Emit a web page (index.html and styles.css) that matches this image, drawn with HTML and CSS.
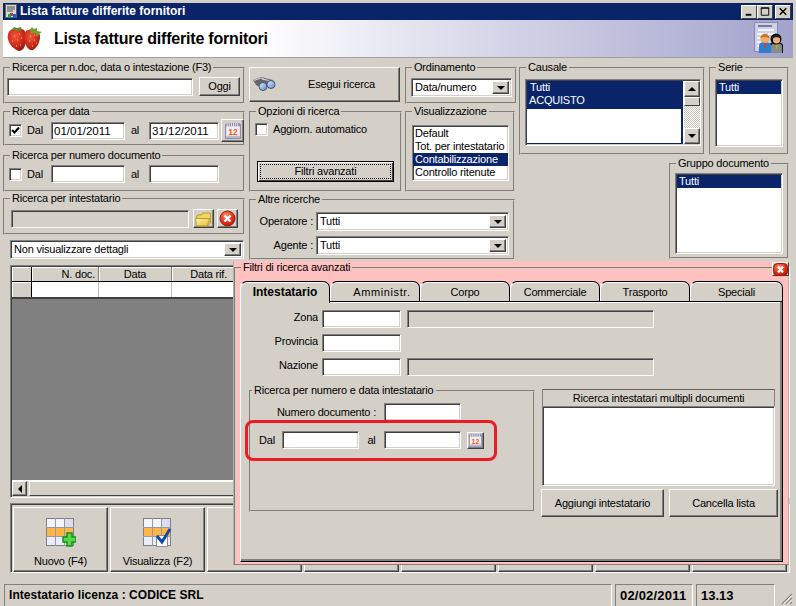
FILE: index.html
```html
<!DOCTYPE html>
<html lang="it">
<head>
<meta charset="utf-8">
<title>Lista fatture differite fornitori</title>
<link rel="stylesheet" href="styles.css">
</head>
<body>
<svg class="defs" width="0" height="0" aria-hidden="true">
  <defs>
    <radialGradient id="berry" cx="40%" cy="35%" r="70%"><stop offset="0" stop-color="#f0583c"/><stop offset=".6" stop-color="#cf2a1c"/><stop offset="1" stop-color="#8f1a12"/></radialGradient>
    <radialGradient id="redball" cx="40%" cy="30%" r="75%"><stop offset="0" stop-color="#ff8a60"/><stop offset=".6" stop-color="#e8301c"/><stop offset="1" stop-color="#b01808"/></radialGradient>
    <linearGradient id="lens" x1="0" y1="0" x2="1" y2="1"><stop offset="0" stop-color="#dcecff"/><stop offset="1" stop-color="#4f8fd8"/></linearGradient>
    <linearGradient id="folder" x1="0" y1="0" x2="1" y2="1"><stop offset="0" stop-color="#fff6b8"/><stop offset="1" stop-color="#e6b92c"/></linearGradient>
    <symbol id="cal" viewBox="0 0 17 17">
      <rect x="1.5" y="2.5" width="14" height="13" fill="#eeeefa" stroke="#8888a8"/>
      <rect x="2" y="1" width="13" height="3" fill="#8c8cac"/>
      <path d="M3 1v3M5 1v3M7 1v3M9 1v3M11 1v3M13 1v3" stroke="#fff" stroke-width=".7"/>
      <rect x="2" y="13" width="13" height="2" fill="#b8b8d8"/>
      <text x="8.500" y="12" text-anchor="middle" class="cal-num">12</text>
    </symbol>
    <symbol id="tbl" viewBox="0 0 28 28">
      <rect x="0.5" y="0.5" width="27" height="27" fill="#fff" stroke="#808080"/>
      <rect x="1" y="1" width="26" height="8" fill="#f4f4ff"/>
      <rect x="19" y="1" width="8" height="8" fill="#dcdcf4"/>
      <rect x="1" y="10" width="26" height="8" fill="#ffb648"/>
      <rect x="1" y="19" width="26" height="8" fill="#ececff"/>
      <path d="M9.500 0v28M18.500 0v28M0 9.500h28M0 18.500h28" stroke="#9a9a9a"/>
    </symbol>
  </defs>
</svg>

<div class="app">
  <div class="titlebar">
    <svg class="title-icon" width="14" height="15" viewBox="0 0 14 15">
      <rect x=".5" y=".5" width="11" height="13" fill="#d8d8d8" stroke="#606060"/>
      <path d="M2 3h8M2 5h8M2 7h6" stroke="#505050"/>
      <rect x="5" y="9" width="3" height="3" fill="#e03020"/><rect x="8" y="10" width="3" height="4" fill="#2060d0"/><rect x="3" y="10" width="3" height="4" fill="#20a040"/>
    </svg>
    <span class="title-text">Lista fatture differite fornitori</span>
    <span class="wbtns">
      <span class="wbtn"><svg width="15" height="13" viewBox="0 0 15 13"><rect x="4" y="9" width="6" height="2"/></svg></span>
      <span class="wbtn"><svg width="15" height="13" viewBox="0 0 15 13"><path d="M3.500 2.500h8v8h-8z M3 3h9" fill="none" stroke="#000"/></svg></span>
      <span class="wbtn wbtn-close"><svg width="15" height="13" viewBox="0 0 15 13"><path d="M4 3l7 7M11 3l-7 7" stroke="#000" stroke-width="1.500"/></svg></span>
    </span>
  </div>

  <header class="banner">
    <svg class="berries" width="38" height="26" viewBox="0 0 38 26">
      <path d="M18 4c-3-2-7-2-11-1-4 1-6 5-5 10 1 6 7 11 11 12 4 0 6-4 7-9 1-5 0-10-2-12z" fill="url(#berry)"/>
      <path d="M31 5c-3-2-8-2-11 0-2 3-2 9 0 14 1 3 4 6 7 5 4-2 7-8 7-13 0-3-1-5-3-6z" fill="url(#berry)"/>
      <path d="M5 4l3-3 3 1 4-1 1 3-5 1-3-1z" fill="#6d8a2a"/>
      <path d="M24 4l2-3 2 2 3-1 0 3 5 1-3 2-2 3-2-4-4 1z" fill="#7d9a30"/>
      <path d="M8 10h1M13 8h1M6 15h1M11 14h1M15 12h1M10 20h1M14 19h1M24 10h1M28 9h1M23 15h1M28 14h1M26 20h1M30 17h1" stroke="#f8c060"/>
    </svg>
    <h1 class="banner-title">Lista fatture differite fornitori</h1>
    <svg class="people" width="30" height="33" viewBox="0 0 30 33">
      <rect x=".5" y=".5" width="23" height="29" fill="#cfcfe8" stroke="#8a8ab4"/>
      <path d="M4 4h14" stroke="#7878a0" stroke-width="2"/><path d="M4 8h16M14 12h7M3 12h7M3 16h5M3 20h4M3 24h3" stroke="#fff" stroke-width="1.500"/>
      <path d="M15 31v-7c0-3 3-4 7-4s7 1 7 4v7z" fill="#000"/>
      <path d="M17 31v-7c0-2 2-3 5-3s6 1 6 3v7z" fill="#8a8a8a"/>
      <path d="M21 21h3l-1 7z" fill="#c8b020"/>
      <circle cx="22" cy="17" r="5.500" fill="#000"/><circle cx="22.500" cy="18" r="3.600" fill="#e8b080"/><path d="M18 16c1-4 8-4 9 0-3-1-6-1-9 0z" fill="#222"/>
      <path d="M5 31v-7c0-3 3-4 6-4s6 1 6 4v7z" fill="#2f7fcf"/>
      <path d="M9.500 21h3l-1.500 6z" fill="#e04020"/>
      <circle cx="11" cy="16.500" r="4.500" fill="#f0b070"/><path d="M6.500 16.500c0-6 9-6 9 0-3-2-6-2-9 0z" fill="#c87818"/>
    </svg>
  </header>

  <div class="top">
    <div class="col-a">
      <fieldset class="group g-search">
        <legend>Ricerca per n.doc, data o intestazione (F3)</legend>
        <div class="row b-search">
          <input class="field w186" type="text" aria-label="Ricerca">
          <button class="btn btn-oggi">Oggi</button>
        </div>
      </fieldset>
      <fieldset class="group g-date">
        <legend>Ricerca per data</legend>
        <div class="row b-date">
          <span class="check"><svg width="9" height="9" viewBox="0 0 9 9"><path d="M1 4l2.500 2.500L8 1.500" fill="none" stroke="#000" stroke-width="2"/></svg></span>
          <span class="lbl w24">Dal</span>
          <input class="field w74" type="text" value="01/01/2011" aria-label="Dal">
          <span class="lbl w24 lbl-to">al</span>
          <input class="field w70" type="text" value="31/12/2011" aria-label="Al">
          <button class="btn btn-cal" aria-label="Calendario"><svg width="18" height="18"><use href="#cal"/></svg></button>
        </div>
      </fieldset>
      <fieldset class="group g-num">
        <legend>Ricerca per numero documento</legend>
        <div class="row b-num">
          <span class="check"></span>
          <span class="lbl w24">Dal</span>
          <input class="field w74" type="text" aria-label="Dal">
          <span class="lbl w24 lbl-to">al</span>
          <input class="field w70" type="text" aria-label="Al">
        </div>
      </fieldset>
      <fieldset class="group g-holder">
        <legend>Ricerca per intestatario</legend>
        <div class="row b-holder">
          <input class="field field-off w178" type="text" disabled aria-label="Intestatario">
          <button class="btn btn-ico" aria-label="Apri"><svg width="17" height="16" viewBox="0 0 17 16"><path d="M1.500 6l1-2h4l1-2h8v10l-3 3h-10z" fill="#f2d860" stroke="#b89a28"/><path d="M.5 7.500h11l3 0-2 7.500h-11z" fill="url(#folder)" stroke="#b89a28"/></svg></button>
          <button class="btn btn-ico" aria-label="Cancella"><svg width="17" height="17" viewBox="0 0 17 17"><circle cx="8.500" cy="8.500" r="7.500" fill="url(#redball)" stroke="#a01808"/><path d="M5.500 5.500l6 6M11.500 5.500l-6 6" stroke="#fff" stroke-width="2.400"/></svg></button>
        </div>
      </fieldset>
      <div class="combo combo-detail"><span class="combo-text">Non visualizzare dettagli</span><span class="combo-btn"><i class="arrow-d"></i></span></div>
    </div>

    <div class="col-b">
      <div class="row-top">
        <div class="col-b1">
          <button class="btn btn-run">
            <svg class="bino" width="23" height="15" viewBox="0 0 23 15">
              <path d="M0 3l8-3 12 3 1 4-11 5-7-4z" fill="#66666e"/><path d="M1 3.500l7-2.500 5 2M9 2l7 1.500" stroke="#d8d8d8" fill="none"/>
              <circle cx="10" cy="9.500" r="4" fill="url(#lens)" stroke="#505060"/><circle cx="18" cy="7.500" r="4" fill="url(#lens)" stroke="#505060"/>
            </svg>
            <span class="run-label">Esegui ricerca</span>
          </button>
          <fieldset class="group g-opt">
            <legend>Opzioni di ricerca</legend>
            <div class="b-opt">
              <div class="row"><span class="check"></span><span class="lbl">Aggiorn. automatico</span></div>
              <button class="btn-default"><span>Filtri avanzati</span></button>
            </div>
          </fieldset>
        </div>
        <div class="col-b2">
          <fieldset class="group g-order">
            <legend>Ordinamento</legend>
            <div class="b-order"><div class="combo combo-order"><span class="combo-text">Data/numero</span><span class="combo-btn"><i class="arrow-d"></i></span></div></div>
          </fieldset>
          <fieldset class="group g-view">
            <legend>Visualizzazione</legend>
            <div class="b-view">
              <ul class="list list-view">
                <li>Default</li>
                <li>Tot. per intestatario</li>
                <li class="sel">Contabilizzazione</li>
                <li>Controllo ritenute</li>
              </ul>
            </div>
          </fieldset>
        </div>
      </div>
      <fieldset class="group g-other">
        <legend>Altre ricerche</legend>
        <div class="b-other">
          <div class="row"><span class="lbl lbl-other">Operatore :</span><div class="combo combo-other"><span class="combo-text">Tutti</span><span class="combo-btn"><i class="arrow-d"></i></span></div></div>
          <div class="row"><span class="lbl lbl-other">Agente :</span><div class="combo combo-other"><span class="combo-text">Tutti</span><span class="combo-btn"><i class="arrow-d"></i></span></div></div>
        </div>
      </fieldset>
    </div>

    <div class="col-c">
      <div class="row-top gap4">
        <fieldset class="group g-cause">
          <legend>Causale</legend>
          <div class="b-list">
            <div class="list list-cause">
              <ul class="cause-items"><li class="sel indent">Tutti</li><li class="sel tall">ACQUISTO</li></ul>
              <div class="vscroll">
                <span class="sb-btn"><i class="arrow-u"></i></span>
                <span class="sb-thumb"></span>
                <span class="sb-track"></span>
                <span class="sb-btn"><i class="arrow-d"></i></span>
              </div>
            </div>
          </div>
        </fieldset>
        <fieldset class="group g-serie">
          <legend>Serie</legend>
          <div class="b-list"><ul class="list list-serie"><li class="sel">Tutti</li></ul></div>
        </fieldset>
      </div>
      <fieldset class="group g-doc">
        <legend>Gruppo documento</legend>
        <div class="b-doc"><ul class="list list-doc"><li class="sel">Tutti</li></ul></div>
      </fieldset>
    </div>
  </div>

  <div class="table">
    <div class="thead">
      <span class="th"></span><span class="th right">N. doc.</span><span class="th center">Data</span><span class="th rif">Data rif.</span><span class="th"></span>
    </div>
    <div class="trow"><span class="th"></span><span class="td"></span><span class="td"></span><span class="td"></span><span class="td"></span></div>
    <div class="tbody"></div>
    <div class="hscroll"><span class="sb-btn"><i class="arrow-l"></i></span><span class="hthumb"></span></div>
  </div>

  <div class="toolbar">
    <button class="tool"><svg class="tool-ico" width="30" height="30" viewBox="0 0 30 30"><use href="#tbl" width="28" height="28"/><path d="M21 15h5v4h4v5h-4v4h-5v-4h-4v-5h4z" fill="#58d848" stroke="#189018" stroke-width="1.500"/></svg><span>Nuovo (F4)</span></button>
    <button class="tool"><svg class="tool-ico" width="30" height="30" viewBox="0 0 30 30"><use href="#tbl" width="28" height="28"/><rect x="13.500" y="17.500" width="11" height="11" fill="#fff" stroke="#909090"/><path d="M14 18l5 6 8-13" fill="none" stroke="#1048b0" stroke-width="3"/></svg><span>Visualizza (F2)</span></button>
    <button class="tool" aria-label="Azione"></button>
    <button class="tool" aria-label="Azione"></button>
    <button class="tool" aria-label="Azione"></button>
    <button class="tool" aria-label="Azione"></button>
    <button class="tool" aria-label="Azione"></button>
    <button class="tool" aria-label="Azione"></button>
  </div>

  <footer class="status">
    <span class="panel p-main">Intestatario licenza : CODICE SRL</span>
    <span class="panel p-date">02/02/2011</span>
    <span class="panel p-time">13.13</span>
    <svg class="grip" width="12" height="12" viewBox="0 0 12 12"><path d="M11 1L1 11M11 5L5 11M11 9L9 11" stroke="#808080" stroke-width="1.200"/><path d="M11 2.500L2.500 11M11 6.500L6.500 11" stroke="#fff"/></svg>
  </footer>

  <section class="dialog">
    <button class="dlg-close" aria-label="Chiudi"><svg width="15" height="13" viewBox="0 0 15 13"><rect x=".5" y=".5" width="14" height="12" rx="4" fill="url(#redball)" stroke="#a01808"/><path d="M5 3.500l5 6M10 3.500l-5 6" stroke="#fff" stroke-width="2.200"/></svg></button>
    <fieldset class="group g-dialog">
      <legend>Filtri di ricerca avanzati</legend>
      <div class="tabs">
        <span class="tab active">Intestatario</span>
        <span class="tab tab-adm">Amministr.</span>
        <span class="tab">Corpo</span>
        <span class="tab">Commerciale</span>
        <span class="tab">Trasporto</span>
        <span class="tab tab-last">Speciali</span>
      </div>
      <div class="tab-panel">
        <div class="form-rows">
          <div class="row"><span class="lbl lbl-form">Zona</span><input class="field w79" type="text" aria-label="Zona"><input class="field field-off w247" type="text" disabled aria-label="Zona descrizione"></div>
          <div class="row"><span class="lbl lbl-form">Provincia</span><input class="field w79" type="text" aria-label="Provincia"></div>
          <div class="row"><span class="lbl lbl-form">Nazione</span><input class="field w79" type="text" aria-label="Nazione"><input class="field field-off w247" type="text" disabled aria-label="Nazione descrizione"></div>
        </div>
        <div class="lower">
          <fieldset class="group g-holdernum">
            <legend>Ricerca per numero e data intestatario</legend>
            <div class="b-holdernum">
              <div class="row"><span class="lbl lbl-numdoc">Numero documento :</span><input class="field w77" type="text" aria-label="Numero documento"></div>
              <div class="row range">
                <span class="lbl lbl-dal">Dal</span>
                <input class="field w77" type="text" aria-label="Dal">
                <span class="lbl lbl-al">al</span>
                <input class="field w77" type="text" aria-label="Al">
                <button class="btn btn-cal-s" aria-label="Calendario"><svg width="15" height="15"><use href="#cal"/></svg></button>
              </div>
            </div>
          </fieldset>
          <div class="multi">
            <div class="multi-head">Ricerca intestatari multipli documenti</div>
            <div class="list multi-list"></div>
            <div class="row multi-actions">
              <button class="btn btn-add">Aggiungi intestatario</button>
              <button class="btn btn-clear">Cancella lista</button>
            </div>
          </div>
        </div>
      </div>
    </fieldset>
    <div class="highlight"></div>
  </section>
</div>
</body>
</html>
```

FILE: styles.css
```css
* { box-sizing: border-box; }
html, body { margin: 0; padding: 0; }
body { background: #d4d0c8; font: 11px/13px "Liberation Sans", Arial, sans-serif; letter-spacing: -.2px; color: #000; overflow: hidden; }
.defs { position: absolute; }
.cal-num { font: bold 8px "Liberation Sans", Arial, sans-serif; fill: #ff5a00; letter-spacing: 0; }
ul { list-style: none; margin: 0; padding: 0; }

.app { position: relative; width: 796px; height: 606px; padding-top: 3px; overflow: hidden; display: flex; flex-direction: column; background: #d4d0c8; }

/* title */
.titlebar { height: 17px; margin: 0 3px; flex: none; background: #0a246a; display: flex; align-items: center; color: #fff; }
.title-icon { margin-left: 2px; flex: none; }
.title-text { margin-left: 1px; font-weight: bold; font-size: 12px; letter-spacing: 0; }
.wbtns { margin-left: auto; margin-right: 2px; display: flex; }
.wbtn { width: 16px; height: 14px; background: #d4d0c8; display: flex; align-items: center; justify-content: center; border: 1px solid; border-color: #fff #404040 #404040 #fff; }
.wbtn-close { margin-left: 2px; }

.banner { height: 38px; flex: none; margin: 0 3px; display: flex; align-items: center; border-bottom: 1px solid #a0a0a0; background: linear-gradient(90deg, #fff 32%, #a2a2cc 100%); }
.berries { margin-left: 3px; flex: none; }
.banner-title { margin: 0 0 0 10px; font-size: 16px; line-height: 20px; font-weight: bold; letter-spacing: -.2px; }
.people { margin-left: auto; margin-right: 9px; flex: none; }

/* group box */
.group { margin: 0; padding: 0; min-width: 0; border: 2px groove #d4d0c8; display: block; flex: none; }
.group legend { margin-left: 5px; padding: 0 2px; line-height: 13px; height: 13px; white-space: nowrap; }

.row { display: flex; align-items: center; }
.lbl { flex: none; white-space: nowrap; }
.center { text-align: center; }
.right { text-align: right; }
.lbl-to { text-align: center; padding-right: 4px; }

/* widgets */
.field { display: block; flex: none; height: 18px; margin: 0; padding: 0 2px; font: 11.5px "Liberation Sans", Arial, sans-serif; letter-spacing: 0; color: #000; background: #fff; border: 1px solid; border-color: #808080 #fff #fff #808080; box-shadow: inset 1px 1px 0 #404040, inset -1px -1px 0 #d4d0c8; border-radius: 0; outline: 0; }
.field-off { background: #d4d0c8; }
.w186 { width: 186px; } .w74 { width: 74px; } .w70 { width: 70px; } .w178 { width: 178px; }
.w79 { width: 79px; } .w247 { width: 247px; margin-left: 6px; } .w77 { width: 77px; }
.w24 { width: 24px; }

.btn { display: flex; align-items: center; justify-content: center; flex: none; padding: 0; margin: 0; font: inherit; letter-spacing: inherit; color: #000; background: #d4d0c8; border: 1px solid; border-color: #fff #404040 #404040 #fff; box-shadow: inset -1px -1px 0 #808080; border-radius: 0; }
.check { width: 13px; height: 13px; flex: none; display: flex; align-items: center; justify-content: center; background: #fff; border: 1px solid; border-color: #808080 #fff #fff #808080; box-shadow: inset 1px 1px 0 #404040, inset -1px -1px 0 #d4d0c8; }

.combo { display: flex; align-items: center; background: #fff; border: 1px solid; border-color: #808080 #fff #fff #808080; box-shadow: inset 1px 1px 0 #404040, inset -1px -1px 0 #d4d0c8; padding: 2px; flex: none; }
.combo-text { flex: 1; padding-left: 1px; white-space: nowrap; }
.combo-btn { width: 17px; height: 100%; flex: none; display: flex; align-items: center; justify-content: center; background: #d4d0c8; border: 1px solid; border-color: #fff #404040 #404040 #fff; box-shadow: inset -1px -1px 0 #808080; }
.arrow-d { width: 0; height: 0; border: 4px solid transparent; border-top-color: #000; border-bottom-width: 0; }
.arrow-u { width: 0; height: 0; border: 4px solid transparent; border-bottom-color: #000; border-top-width: 0; }
.arrow-l { width: 0; height: 0; border: 4px solid transparent; border-right-color: #000; border-left-width: 0; }

.list { background: #fff; border: 1px solid; border-color: #808080 #fff #fff #808080; box-shadow: inset 1px 1px 0 #404040, inset -1px -1px 0 #d4d0c8; padding: 1px; flex: none; overflow: hidden; }
.list li { height: 13px; line-height: 13px; padding-left: 2px; white-space: nowrap; }
.list li.sel { background: #0a246a; color: #fff; }

/* top */
.top { display: flex; padding: 3px 0 0 3px; flex: none; }
.col-a { width: 242px; flex: none; }
.col-b { width: 268px; margin-left: 4px; flex: none; }
.col-c { width: 270px; margin-left: 2px; flex: none; display: flex; flex-direction: column; }
.row-top { display: flex; }
.gap4 { gap: 4px; }

.g-search { width: 242px; height: 43px; }
.b-search { padding: 3px 0 0 2px; gap: 6px; }
.btn-oggi { width: 41px; height: 19px; }
.g-date { width: 242px; height: 41px; margin-top: 1px; }
.b-date { padding: 1px 0 0 4px; }
.b-date .check, .b-num .check { margin-right: 5px; }
.btn-cal { width: 23px; height: 23px; margin-left: 2px; }
.g-num { width: 242px; height: 43px; margin-top: 3px; }
.b-num { padding: 3px 0 0 4px; }
.g-holder { width: 242px; height: 43px; }
.b-holder { padding: 4px 0 0 6px; }
.btn-ico { width: 21px; height: 19px; margin-left: 3px; }
.b-holder .btn-ico:first-of-type { margin-left: 4px; }
.combo-detail { width: 234px; height: 19px; margin: 5px 0 0 7px; }

.col-b1 { width: 153px; margin-right: 3px; flex: none; }
.col-b2 { width: 112px; flex: none; }
.btn-run { width: 151px; height: 35px; margin-top: 6px; justify-content: flex-start; padding-left: 3px; }
.run-label { flex: 1; text-align: center; padding-left: 8px; }
.bino { flex: none; }
.g-opt { width: 153px; height: 87px; margin-top: 3px; }
.b-opt { padding: 5px 0 0 4px; }
.b-opt .check { margin-right: 5px; }
.btn-default { display: block; width: 137px; height: 21px; margin: 25px 0 0 2px; padding: 2px; background: #d4d0c8; border: 1px solid #000; font: inherit; letter-spacing: inherit; color: #000; box-shadow: inset 1px 1px 0 #fff, inset -1px -1px 0 #404040; }
.btn-default span { display: block; height: 15px; line-height: 13px; border: 1px dotted #000; }
.g-order { width: 112px; height: 43px; }
.b-order { padding: 4px 0 0 4px; }
.combo-order { width: 101px; height: 19px; }
.g-view { width: 110px; height: 87px; margin-top: 1px; }
.b-view { padding: 7px 0 0 5px; }
.list-view { width: 97px; height: 56px; padding: 1px 0; }
.g-other { width: 266px; height: 67px; margin-top: 1px; }
.b-other { padding: 6px 0 0 0; display: flex; flex-direction: column; gap: 5px; }
.lbl-other { width: 62px; text-align: right; margin-right: 3px; }
.combo-other { width: 193px; height: 19px; }

.g-cause { width: 186px; height: 94px; }
.b-list { padding: 5px 0 0 4px; }
.list-cause { width: 176px; height: 67px; display: flex; padding: 1px 0 1px 1px; }
.cause-items { flex: 1; border-bottom: 1px solid #0a246a; border-right: 2px solid #0a246a; }
.list .tall { height: 15px; }
.list .indent { padding-left: 3px; }
.vscroll { width: 17px; flex: none; display: flex; flex-direction: column; align-items: flex-end; }
.sb-btn { width: 16px; height: 16px; flex: none; display: flex; align-items: center; justify-content: center; background: #d4d0c8; border: 1px solid; border-color: #fff #404040 #404040 #fff; box-shadow: inset -1px -1px 0 #808080; }
.sb-thumb { height: 9px; width: 16px; flex: none; background: #d4d0c8; border: 1px solid; border-color: #fff #404040 #404040 #fff; }
.sb-track { flex: 1; width: 16px; background: conic-gradient(#fff 25%, #c8c4bc 0 50%, #fff 0 75%, #c8c4bc 0) 0 0 / 2px 2px; }
.g-serie { width: 80px; height: 94px; }
.list-serie { width: 68px; height: 68px; }
.g-doc { width: 120px; height: 102px; margin: 2px 0 0 150px; }
.b-doc { padding: 3px 0 0 4px; }
.list-doc { width: 108px; height: 81px; }

/* table */
.table { width: 780px; height: 233px; margin: 5px 0 0 10px; flex: none; display: flex; flex-direction: column; border: 1px solid; border-color: #808080 #fff #fff #808080; box-shadow: inset 1px 1px 0 #404040, inset -1px -1px 0 #d4d0c8; padding: 1px; }
.thead, .trow { display: grid; grid-template-columns: 20px 67px 73px 73px 1fr; flex: none; }
.thead { height: 15px; border-bottom: 1px solid #000; }
.trow { height: 17px; border-bottom: 2px solid #404040; background: #fff; }
.th { background: #d4d0c8; border-right: 1px solid #808080; box-shadow: inset 1px 1px 0 #fff; padding: 0 3px; white-space: nowrap; line-height: 14px; }
.thead .th:first-child, .trow .th:first-child { border-right: 1px solid #000; }
.th.rif { text-align: right; padding-right: 17px; }
.td { border-right: 1px solid #c0c0c0; }
.tbody { flex: 1; background: #808080; }
.hscroll { height: 16px; flex: none; display: flex; background: #d4d0c8; border-top: 1px solid #fff; }
.hscroll .sb-btn { width: 15px; height: 15px; }
.hthumb { flex: 1; margin-left: 2px; border: 1px solid; border-color: #fff #404040 #404040 #fff; }

/* toolbar */
.toolbar { height: 70px; width: 780px; margin: 5px 0 0 10px; flex: none; display: flex; gap: 2px; padding: 3px 2px 1px 2px; border: 1px solid; border-color: #808080 #fff #fff #808080; box-shadow: inset 1px 1px 0 #404040; }
.tool { width: 95px; height: 65px; flex: none; padding: 0; margin: 0; background: #d4d0c8; display: flex; flex-direction: column; align-items: center; font: inherit; letter-spacing: inherit; color: #000; border: 1px solid; border-color: #fff #404040 #404040 #fff; box-shadow: inset -1px -1px 0 #808080; }
.tool-ico { margin-top: 10px; }
.tool span { margin-top: 7px; }

/* status */
.status { flex: none; height: 23px; margin-top: 11px; padding-left: 4px; display: flex; gap: 3px; position: relative; }
.panel { display: flex; align-items: center; font-weight: bold; font-size: 12px; border: 1px solid; border-color: #808080 #fff #fff #808080; padding-left: 4px; white-space: nowrap; }
.p-main { width: 608px; letter-spacing: .06px; }
.p-date { width: 78px; font-size: 13px; letter-spacing: .2px; }
.p-time { width: 79px; font-size: 13px; letter-spacing: 0; }
.grip { margin: 9px 0 0 3px; flex: none; }

/* dialog */
.dialog { position: absolute; left: 233px; top: 261px; width: 556px; height: 304px; background: #ffc0c0; border-left: 1px solid #b8b0a8; border-bottom: 1px solid #808080; border-right: 1px solid #b8b0a8; }
.g-dialog { width: 554px; height: 303px; border-width: 2px 0 0 2px; padding: 7px 3px 0 4px; background: transparent; }
.g-dialog legend { margin-left: 1px; }
.dlg-close { position: absolute; right: -1px; top: 1px; width: 17px; height: 14px; padding: 0; display: flex; align-items: center; justify-content: center; background: #d4d0c8; border: 1px solid; border-color: #fff #404040 #404040 #fff; }
.tabs { display: flex; height: 20px; position: relative; }
.tab { width: 90px; height: 20px; flex: none; text-align: center; line-height: 20px; background: #d4d0c8; border-top: 1px solid #000; border-right: 1px solid #000; border-left: 1px solid #fff; border-radius: 7px 7px 0 0; box-shadow: inset 0 1px 0 #fff; white-space: nowrap; }
.tab.active { height: 22px; font-weight: bold; font-size: 12px; letter-spacing: 0; position: relative; z-index: 1; }
.tab-adm { padding-left: 14px; letter-spacing: .6px; }
.tab-last { width: 93px; }
.tab-panel { width: 543px; height: 261px; background: #d4d0c8; border: 1px solid #000; border-left-color: #fff; box-shadow: inset -2px -2px 0 #808080, inset 0 1px 0 #fff; }
.form-rows { padding-top: 8px; display: flex; flex-direction: column; gap: 6px; }
.lbl-form { width: 77px; margin: 0 4px 3px 0; text-align: right; }
.lower { display: flex; margin: 8px 0 0 8px; }
.g-holdernum { width: 286px; height: 128px; }
.b-holdernum { padding-top: 6px; }
.lbl-numdoc { width: 125px; margin-right: 8px; text-align: right; }
.range { margin-top: 10px; }
.lbl-dal { width: 31px; padding-left: 8px; }
.lbl-al { width: 25px; text-align: center; }
.btn-cal-s { width: 17px; height: 17px; margin-left: 6px; }
.multi { width: 237px; margin: 5px 0 0 6px; flex: none; }
.multi-head { width: 233px; height: 17px; margin-left: 1px; line-height: 16px; text-align: center; border-top: 1px solid #606060; border-left: 1px solid #808080; border-right: 1px solid #808080; background: #d4d0c8; }
.multi-list { width: 233px; height: 80px; margin-left: 1px; }
.multi-actions { margin-top: 3px; gap: 5px; }
.btn-add { width: 123px; height: 28px; }
.btn-clear { width: 109px; height: 28px; }
.highlight { position: absolute; left: 11px; top: 159px; width: 252px; height: 41px; border: 3px solid #ed1c24; border-radius: 8px; }
```
